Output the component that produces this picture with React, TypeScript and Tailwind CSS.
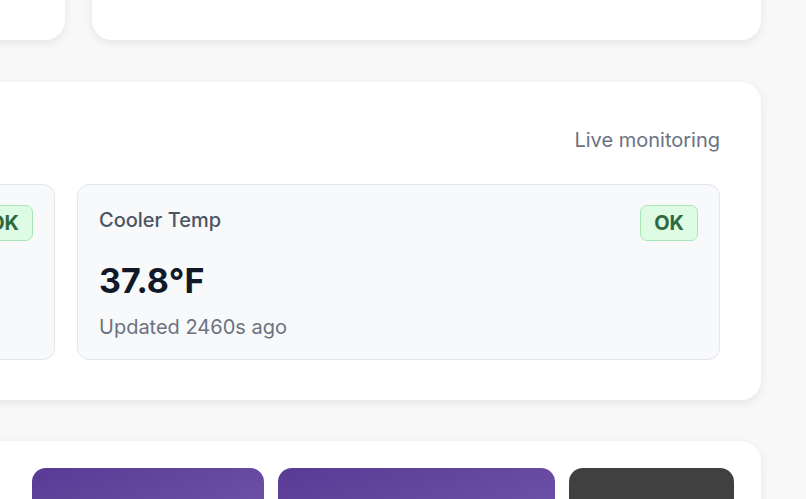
import React from "react";

function SensorCard({ title, value, updated }: { title: string; value: string; updated: string }) {
  return (
    <div className="rounded-[12px] border-[1.5px] border-[#e3e5e9] bg-[#f8f9fb] px-[21px] pt-[20px] pb-[19px]">
      <div className="flex items-start justify-between">
        <div className="pt-[2px] text-[20px] leading-[26px] font-medium text-[#4b5563]">{title}</div>
        <div className="rounded-[7px] border-[1.5px] border-[#a9e6b5] bg-[#defbe4] px-[13px] py-[5px] text-[20px] leading-[24px] font-bold text-[#2e6a3e]">
          OK
        </div>
      </div>
      <div className="mt-[20px] text-[34px] leading-[40px] font-bold text-[#111827]">{value}</div>
      <div className="mt-[13px] text-[20px] leading-[26px] text-[#6b7280]">{updated}</div>
    </div>
  );
}

export default function App() {
  return (
    <div
      className="h-[499px] w-[806px] overflow-hidden bg-[#f8f8f8]"
      style={{ fontFamily: "Inter, 'Noto Sans', 'Liberation Sans', sans-serif" }}
    >
      <div className="ml-[-629px] mt-[-80px] flex w-[1390px] flex-col">
        <div className="grid grid-cols-[1fr_669px] gap-[27px]">
          <div className="h-[120px] rounded-[20px] bg-white shadow-[0_3px_10px_rgba(0,0,0,0.08)]" />
          <div className="h-[120px] rounded-[20px] bg-white shadow-[0_3px_10px_rgba(0,0,0,0.08)]" />
        </div>

        <div className="mt-[42px] rounded-[20px] bg-white px-[41px] pt-[41px] pb-[40px] shadow-[0_3px_10px_rgba(0,0,0,0.08)]">
          <div className="flex h-[34px] items-center justify-between">
            <div className="text-[26px] font-bold text-[#111827]">Temperature Sensors</div>
            <div className="text-[20px] leading-[26px] text-[#6b7280]">Live monitoring</div>
          </div>
          <div className="mt-[27px] grid grid-cols-2 gap-[22px]">
            <SensorCard title="Freezer Temp" value="-2.4°F" updated="Updated 2460s ago" />
            <SensorCard title="Cooler Temp" value="37.8°F" updated="Updated 2460s ago" />
          </div>
        </div>

        <div className="mt-[41px] rounded-[20px] bg-white px-[27px] pt-[27px] pb-[27px] shadow-[0_3px_10px_rgba(0,0,0,0.08)]">
          <div className="flex justify-end gap-[14px]">
            <div className="h-[90px] w-[232px] rounded-[14px] bg-gradient-to-br from-[#583b94] to-[#7558ae] pt-[28px] text-center text-[19px] leading-[26px] font-semibold text-white">
              Start Shift
            </div>
            <div className="h-[90px] w-[277px] rounded-[14px] bg-gradient-to-br from-[#583b94] to-[#7558ae] pt-[28px] text-center text-[19px] leading-[26px] font-semibold text-white">
              Log Temperature
            </div>
            <div className="h-[90px] w-[165px] rounded-[14px] bg-[#404040] pt-[28px] text-center text-[19px] leading-[26px] font-semibold text-white">
              Settings
            </div>
          </div>
        </div>
      </div>
    </div>
  );
}
